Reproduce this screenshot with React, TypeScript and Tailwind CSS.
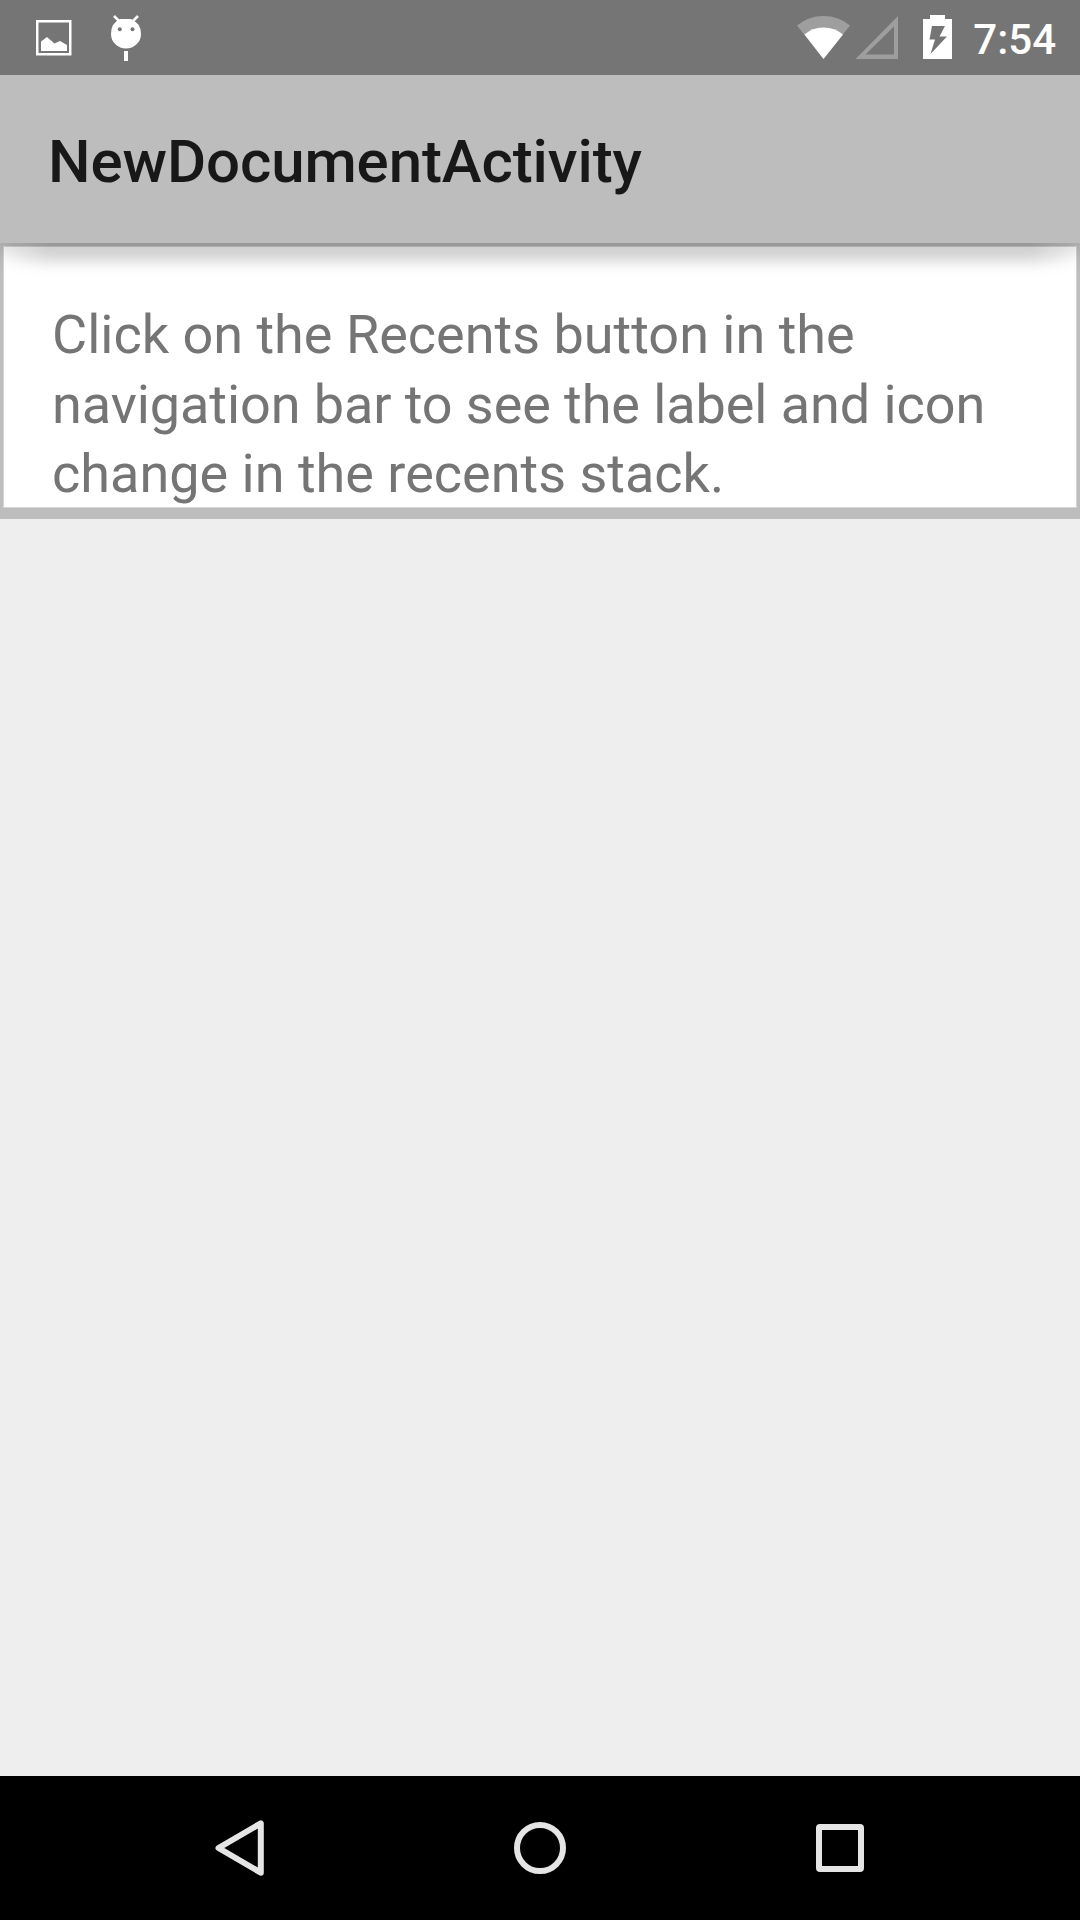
import React from "react";

function StatusBar() {
  return (
    <header className="flex h-[75px] justify-between bg-[#757575]">
      <svg className="h-[75px] w-[180px]" viewBox="0 0 180 75" fill="none">
        <rect x="37.25" y="21.25" width="33" height="33" stroke="white" strokeWidth="2.5" />
        <path d="M41 51V41.5L47 37L54.5 43.5L60 41L67 45V51Z" fill="white" />
        <path d="M120 19H131Q141 23 141 34A15 14.5 0 0 1 111 34Q111 23 120 19Z" fill="white" />
        <path d="M114 16L120 22M138 16L132 22" stroke="white" strokeWidth="2.5" />
        <circle cx="119.8" cy="29.2" r="2" fill="#757575" />
        <circle cx="132.5" cy="29.2" r="2" fill="#757575" />
        <path d="M124 51H128V61H124Z" fill="white" />
      </svg>
      <div className="flex pr-[24px]">
        <svg className="h-[75px] w-[193px]" viewBox="780 0 193 75" fill="none">
          <path d="M823.5 59L797 25.5Q808 16 823.5 16T850 25.5Z" fill="#9e9e9e" />
          <path d="M823.5 59L804.5 34.5Q812 27.5 823.5 27.5T843 34.5Z" fill="white" />
          <path fillRule="evenodd" d="M898 16V59H855.5ZM894 26.5L865.5 54.5H894Z" fill="#9e9e9e" />
          <path fillRule="evenodd" d="M930 15H945V19H952V59H923V19H930ZM932 26L929.5 39.5H935L930.5 54L947 36.5H939.5L945 26Z" fill="white" />
        </svg>
        <span className="pt-[1.5px] text-[42px] leading-[75px] font-medium text-white">7:54</span>
      </div>
    </header>
  );
}

function DocumentPanel() {
  return (
    <section className="relative h-[276px] overflow-hidden bg-[#bdbdbd] px-[3px] pt-[3px] pb-[11px]">
      <div className="h-[262px] border border-[#d6d6d6] bg-white px-[48px] pt-[53px] text-[54px] leading-[69.6px] text-[#757575]">
        <p className="whitespace-nowrap">
          Click on the Recents button in the
          <br />
          <span className="tracking-[-0.08px]">navigation bar to see the label and icon</span>
          <br />
          change in the recents stack.
        </p>
      </div>
      <div className="absolute inset-x-0 top-0 h-[50px] overflow-hidden [mask-image:linear-gradient(to_right,rgba(0,0,0,0.5),black_50px,black_1030px,rgba(0,0,0,0.5))]">
        <div className="absolute -inset-x-[6px] -top-[60px] h-[77.5px] bg-black/19 blur-[7.5px] [border-radius:0_0_60px_60px/0_0_12px_12px]" />
      </div>
    </section>
  );
}

function NavigationBar() {
  return (
    <nav className="flex h-[144px] items-center justify-between bg-black px-[180px]">
      <button aria-label="Back">
        <svg className="h-[120px] w-[120px]" viewBox="180 1788 120 120" fill="none">
          <path d="M218.5 1848L260.8 1823.3V1872.7Z" stroke="#e5e5e5" strokeWidth="6" strokeLinejoin="round" />
        </svg>
      </button>
      <button aria-label="Home">
        <svg className="h-[120px] w-[120px]" viewBox="0 0 120 120" fill="none">
          <circle cx="60" cy="60" r="23" stroke="#e5e5e5" strokeWidth="6" />
        </svg>
      </button>
      <button aria-label="Recents">
        <svg className="h-[120px] w-[120px]" viewBox="0 0 120 120" fill="none">
          <path fillRule="evenodd" d="M40 36H80Q84 36 84 40V80Q84 84 80 84H40Q36 84 36 80V40Q36 36 40 36ZM42 42V78H78V42Z" fill="#e5e5e5" />
        </svg>
      </button>
    </nav>
  );
}

export default function App() {
  return (
    <div className="flex h-[1920px] w-[1080px] flex-col overflow-hidden bg-[#eeeeee] font-['Roboto',sans-serif]">
      <StatusBar />
      <div className="flex h-[168px] items-center bg-[#bdbdbd] px-[48px] pt-[6px]">
        <h1 className="text-[60px] leading-[70px] font-medium tracking-[-0.1px] text-[#181818]">NewDocumentActivity</h1>
      </div>
      <DocumentPanel />
      <main className="grow" />
      <NavigationBar />
    </div>
  );
}
